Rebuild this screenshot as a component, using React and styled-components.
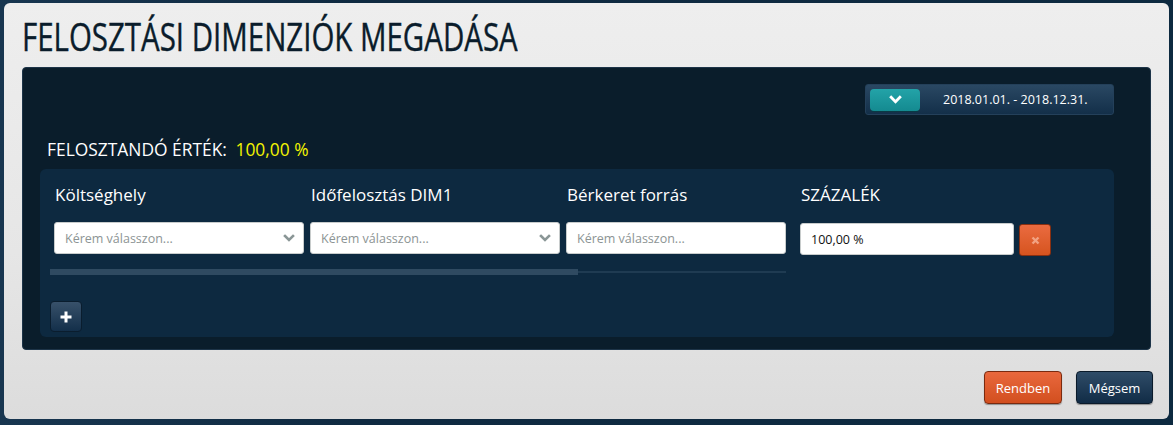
import React from 'react';
import styled, { createGlobalStyle } from 'styled-components';

const GlobalStyle = createGlobalStyle`
  html, body {
    margin: 0;
    padding: 0;
    background: #0f2a41;
    font-family: 'Open Sans', 'Liberation Sans', sans-serif;
  }
`;

const COLUMNS = ['Költséghely', 'Időfelosztás DIM1', 'Bérkeret forrás'];

const Chevron = ({ color = '#8a9696', size = 12 }) => (
  <svg width={size} height={size} viewBox="0 0 12 12">
    <path d="M2 4 L6 8 L10 4" fill="none" stroke={color} strokeWidth="2.6" strokeLinecap="square" />
  </svg>
);

const App = () => (
  <Page>
    <GlobalStyle />
    <Modal>
      <Title>
        <TitleText>FELOSZTÁSI DIMENZIÓK MEGADÁSA</TitleText>
      </Title>
      <DarkPanel>
        <TopBar>
          <DateRange>
            <ToggleButton>
              <Chevron color="#ffffff" size={13} />
            </ToggleButton>
            <DateText>2018.01.01. - 2018.12.31.</DateText>
          </DateRange>
        </TopBar>
        <Total>
          FELOSZTANDÓ ÉRTÉK: <TotalValue>100,00 %</TotalValue>
        </Total>
        <InnerPanel>
          <Row>
            <ScrollArea>
              <Columns>
                {COLUMNS.map((label, i) => (
                  <Column key={label} width={i === 2 ? 220 : 250}>
                    <Header>{label}</Header>
                    <Select>
                      <Placeholder>Kérem válasszon...</Placeholder>
                      {i < 2 && <Chevron />}
                    </Select>
                  </Column>
                ))}
              </Columns>
              <Scrollbar>
                <Thumb />
              </Scrollbar>
            </ScrollArea>
            <Column width={214}>
              <Header>SZÁZALÉK</Header>
              <PercentRow>
                <Input>100,00 %</Input>
                <DeleteButton>
                  <svg width="9" height="9" viewBox="0 0 9 9">
                    <path d="M1.5 1.5 L7.5 7.5 M7.5 1.5 L1.5 7.5" stroke="#f2a282" strokeWidth="2.4" />
                  </svg>
                </DeleteButton>
              </PercentRow>
            </Column>
          </Row>
          <AddButton>
            <svg width="12" height="12" viewBox="0 0 12 12">
              <path d="M6 0.5 V11.5 M0.5 6 H11.5" stroke="#ffffff" strokeWidth="3" />
            </svg>
          </AddButton>
        </InnerPanel>
      </DarkPanel>
      <Footer>
        <FooterButton variant="primary" width={78}>Rendben</FooterButton>
        <FooterButton width={77}>Mégsem</FooterButton>
      </Footer>
    </Modal>
  </Page>
);

const Page = styled.div`
  width: 1173px;
  height: 425px;
  overflow: hidden;
  padding-top: 3px;
  box-sizing: border-box;
  background: linear-gradient(90deg, #183650 0%, #0f2a41 30%, #0d2a40 100%);
`;

const Modal = styled.div`
  margin: 0 4px;
  width: 1165px;
  height: 416px;
  box-sizing: border-box;
  padding: 0 18px;
  border-radius: 6px;
  background: linear-gradient(180deg, #eeeeee 0%, #e6e6e6 60%, #dcdcdc 100%);
  display: flex;
  flex-direction: column;
`;

const Title = styled.h1`
  margin: 0;
  height: 64px;
  display: flex;
  align-items: center;
  padding-top: 1px;
  box-sizing: border-box;
`;

const TitleText = styled.span`
  display: inline-block;
  font-family: 'Open Sans', sans-serif;
  font-weight: 400;
  font-size: 38px;
  color: #0a1c2b;
  transform: scaleX(0.775);
  transform-origin: left center;
  white-space: nowrap;
  -webkit-text-stroke: 0.4px #0a1c2b;
`;

const DarkPanel = styled.div`
  height: 283px;
  box-sizing: border-box;
  padding: 16px 36px 12px 17px;
  background: #0a1d2b;
  border-radius: 4px;
  border: 1px solid #1d3448;
  display: flex;
  flex-direction: column;
`;

const TopBar = styled.div`
  display: flex;
  justify-content: flex-end;
`;

const DateRange = styled.div`
  width: 249px;
  height: 31px;
  box-sizing: border-box;
  padding: 4px;
  display: flex;
  align-items: center;
  border-radius: 3px;
  border: 1px solid #24405a;
  background: linear-gradient(180deg, #2a4863 0%, #132f49 100%);
`;

const ToggleButton = styled.div`
  width: 50px;
  height: 22px;
  border-radius: 4px;
  display: flex;
  align-items: center;
  justify-content: center;
  background: linear-gradient(180deg, #23a3a8 0%, #148a90 100%);
  box-shadow: 0 1px 0 #0a3a45;
`;

const DateText = styled.span`
  margin-left: 23px;
  font-size: 12.5px;
  color: #ffffff;
  font-family: 'Open Sans', sans-serif;
`;

const Total = styled.div`
  margin: 22px 0 0 7px;
  font-size: 17.4px;
  color: #ffffff;
  line-height: 24px;
`;

const TotalValue = styled.span`
  margin-left: 4px;
  color: #f4f400;
`;

const InnerPanel = styled.div`
  margin-top: 8px;
  flex: 1;
  border-radius: 6px;
  background: #0d2940;
  padding: 14px 0 0 10px;
  display: flex;
  flex-direction: column;
  align-items: flex-start;
`;

const Row = styled.div`
  display: flex;
  gap: 14px;
`;

const ScrollArea = styled.div`
  width: 736px;
  display: flex;
  flex-direction: column;
`;

const Columns = styled.div`
  display: flex;
  gap: 6px;
  padding-left: 4px;
`;

const Column = styled.div`
  width: ${props => props.width}px;
  display: flex;
  flex-direction: column;
`;

const Header = styled.div`
  margin: 0 0 15px 1px;
  font-size: 17px;
  line-height: 24px;
  height: 24px;
  color: #ffffff;
`;

const Select = styled.div`
  height: 32px;
  box-sizing: border-box;
  padding: 0 8px 0 10px;
  display: flex;
  align-items: center;
  justify-content: space-between;
  border-radius: 3px;
  background: #ffffff;
  border: 1px solid #c8cccc;
`;

const Placeholder = styled.span`
  font-size: 12.5px;
  color: #8c9494;
`;

const Scrollbar = styled.div`
  margin-top: 15px;
  height: 6px;
  background: linear-gradient(180deg, #0d2940 0%, #0d2940 40%, #1f3b52 40%, #1f3b52 70%, #0d2940 70%);
  display: flex;
`;

const Thumb = styled.div`
  width: 528px;
  height: 6px;
  background: #2f4a61;
`;

const PercentRow = styled.div`
  display: flex;
  align-items: center;
  gap: 5px;
`;

const Input = styled.div`
  width: 214px;
  flex-shrink: 0;
  height: 32px;
  box-sizing: border-box;
  padding: 0 10px;
  display: flex;
  align-items: center;
  border-radius: 3px;
  background: #ffffff;
  border: 1px solid #c8cccc;
  font-size: 12.5px;
  color: #111111;
`;

const DeleteButton = styled.div`
  width: 32px;
  height: 32px;
  flex-shrink: 0;
  margin-top: 2px;
  box-sizing: border-box;
  display: flex;
  align-items: center;
  justify-content: center;
  border-radius: 3px;
  background: linear-gradient(180deg, #ea6b40 0%, #d6541f 100%);
  border: 1px solid #8a2f10;
`;

const AddButton = styled.div`
  margin-top: 26px;
  width: 32px;
  height: 31px;
  box-sizing: border-box;
  display: flex;
  align-items: center;
  justify-content: center;
  border-radius: 4px;
  background: linear-gradient(180deg, #38516a 0%, #132f4a 100%);
  border: 1px solid #0a1d2e;
`;

const Footer = styled.div`
  display: flex;
  justify-content: flex-end;
  gap: 14px;
  margin-top: 21px;
  margin-right: -2px;
`;

const FooterButton = styled.div`
  width: ${props => props.width}px;
  height: 33px;
  box-sizing: border-box;
  display: flex;
  align-items: center;
  justify-content: center;
  border-radius: 4px;
  font-size: 13px;
  color: #ffffff;
  background: ${props =>
    props.variant === 'primary'
      ? 'linear-gradient(180deg, #e9683d 0%, #d24f1f 100%)'
      : 'linear-gradient(180deg, #2f4c68 0%, #112c46 100%)'};
  border: 1px solid ${props => (props.variant === 'primary' ? '#7a2a0f' : '#0a1a2a')};
  box-shadow: 0 1px 1px rgba(0, 0, 0, 0.35);
`;

export default App;
